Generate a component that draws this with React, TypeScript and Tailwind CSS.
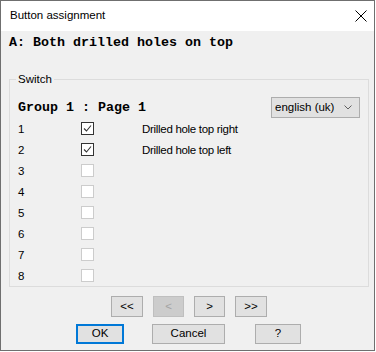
const ui = { fontFamily: '"Liberation Sans", Arial, sans-serif' };
const mono = { fontFamily: '"Liberation Mono", "Courier New", monospace' };

const rows = [
  { n: 1, checked: true, label: 'Drilled hole top right' },
  { n: 2, checked: true, label: 'Drilled hole top left' },
  { n: 3, checked: false, label: '' },
  { n: 4, checked: false, label: '' },
  { n: 5, checked: false, label: '' },
  { n: 6, checked: false, label: '' },
  { n: 7, checked: false, label: '' },
  { n: 8, checked: false, label: '' },
];

function CheckBox({ checked }: { checked: boolean }) {
  return (
    <div
      className={`w-[13px] h-[13px] bg-white border ${
        checked ? 'border-[#333333]' : 'border-[#cccccc]'
      }`}
    >
      {checked && (
        <svg width="11" height="11" viewBox="0 0 11 11">
          <polyline
            points="2,5.5 4.5,8 9,2.5"
            fill="none"
            stroke="#333333"
            strokeWidth="1.1"
          />
        </svg>
      )}
    </div>
  );
}

function NavButton({ label, width, disabled }: { label: string; width: string; disabled?: boolean }) {
  return (
    <div
      className={`h-[21px] ${width} flex items-center justify-center border text-[11.5px] ${
        disabled
          ? 'bg-[#cccccc] border-[#bfbfbf] text-[#a3a3a3]'
          : 'bg-[#e1e1e1] border-[#adadad] text-black'
      }`}
    >
      {label}
    </div>
  );
}

export default function App() {
  return (
    <div className="w-[376px] h-[352px] bg-white" style={ui}>
      <div className="w-[375px] h-[351px] border border-[#6f6f6f] flex flex-col bg-[#f0f0f0] text-black">
        {/* title bar */}
        <div className="h-[30px] bg-white flex items-center justify-between pl-[9px] pr-[6px]">
          <span className="text-[11.5px]">Button assignment</span>
          <svg width="12" height="12" viewBox="0 0 12 12" className="mr-[1px]">
            <path d="M0.5 0.5 L11.5 11.5 M11.5 0.5 L0.5 11.5" stroke="#000" strokeWidth="1" />
          </svg>
        </div>

        <div className="flex-1 px-[8px]">
          <div className="mt-[4px] h-[16px] leading-[16px] text-[13.33px] font-bold" style={mono}>
            A: Both drilled holes on top
          </div>

          <fieldset className="mt-[22px] w-[360px] border border-[#dcdcdc] pl-[8px] pr-[8px]">
            <legend className="-ml-[2px] px-[2px] text-[11.5px] leading-[13px]">Switch</legend>

            <div className="mt-[11px] h-[21px] flex items-center justify-between">
              <span className="text-[13.33px] leading-[16px] font-bold" style={mono}>
                Group 1 : Page 1
              </span>
              <div className="w-[89px] h-[21px] bg-[#e1e1e1] border border-[#adadad] flex items-center justify-between pl-[3px] pr-[7px] text-[11.5px]">
                <span>english (uk)</span>
                <svg width="8" height="5" viewBox="0 0 8 5">
                  <polyline points="0.5,0.5 4,4 7.5,0.5" fill="none" stroke="#606060" strokeWidth="1" />
                </svg>
              </div>
            </div>

            <div className="flex flex-col">
              {rows.map((r) => (
                <div key={r.n} className="h-[21px] flex items-center text-[11.5px]">
                  <span className="w-[63px] pt-[2px]">{r.n}</span>
                  <CheckBox checked={r.checked} />
                  <span className="ml-[48px] pt-[2px] tracking-[-0.3px]">{r.label}</span>
                </div>
              ))}
            </div>
          </fieldset>

          <div className="mt-[9px] flex ml-[102px] gap-[10px]">
            <NavButton label="<<" width="w-[32px]" />
            <NavButton label="<" width="w-[31px]" disabled />
            <NavButton label=">" width="w-[31px]" />
            <NavButton label=">>" width="w-[32px]" />
          </div>

          <div className="mt-[7px] flex h-[20px] text-[11.5px]">
            <div className="ml-[67px] w-[48px] h-[20px] border-2 border-[#0078d7] bg-[#e1e1e1] flex items-center justify-center">
              OK
            </div>
            <div className="ml-[28px] w-[73px] h-[20px] border border-[#adadad] bg-[#e1e1e1] flex items-center justify-center">
              Cancel
            </div>
            <div className="ml-[30px] w-[46px] h-[20px] border border-[#adadad] bg-[#e1e1e1] flex items-center justify-center">
              ?
            </div>
          </div>
        </div>
      </div>
    </div>
  );
}
